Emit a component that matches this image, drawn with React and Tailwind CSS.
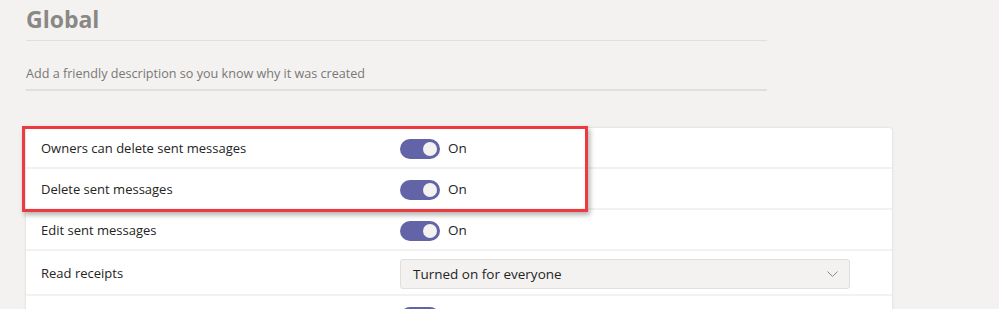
import React from 'react';

function Toggle({ label = 'On' }) {
    return (
        <div className="flex items-center gap-2 pt-[2px]">
            <div className="w-[40px] h-[20px] rounded-full bg-[#6264a7] flex items-center justify-end px-[3px]">
                <div className="w-[14px] h-[14px] rounded-full bg-[#f3f2f1]" />
            </div>
            {label && <span className="text-[13.5px] text-[#252423]">{label}</span>}
        </div>
    );
}

function Row({ label, children, tall }) {
    return (
        <div className={`flex items-center border-b-2 border-[#f3f2f1] ${tall ? 'h-[45px]' : 'h-[41px]'}`}>
            <div className="w-[374px] pl-[15px] pt-[3px] text-[13px] text-[#252423]">{label}</div>
            {children}
        </div>
    );
}

export default function App() {
    return (
        <div
            className="w-[999px] h-[309px] overflow-hidden bg-[#f3f2f1] pl-[26px]"
            style={{ fontFamily: '"Segoe UI", "Open Sans", "Noto Sans", sans-serif' }}
        >
            <div className="w-[741px]">
                <h1 className="pt-[3px] h-[40px] text-[23px] font-bold text-[#8a8886] leading-[32px]">Global</h1>
                <div className="h-[1px] bg-[#e1dfdd]" />
                <div className="pt-[23px] h-[48px] text-[12.6px] text-[#797775] leading-[20px]">
                    Add a friendly description so you know why it was created
                </div>
                <div className="h-[2px] bg-[#e1dfdd]" />
            </div>

            <div className="relative mt-[37px] w-[866px] bg-white rounded-[3px] shadow-[0_0_3px_rgba(0,0,0,0.12)]">
                {/* annotation box */}
                <div className="absolute left-[-4px] top-[-2px] w-[566px] h-[86px] border-[3px] border-[#ec3a40] shadow-[2px_3px_5px_rgba(0,0,0,0.3)] pointer-events-none" />

                <Row label="Owners can delete sent messages"><Toggle /></Row>
                <Row label="Delete sent messages"><Toggle /></Row>
                <Row label="Edit sent messages"><Toggle /></Row>
                <Row label="Read receipts" tall>
                    <div className="w-[450px] h-[30px] mt-[3px] bg-[#f3f2f1] border border-[#e1dfdd] rounded-[3px] flex items-center justify-between pl-[12px] pr-[11px]">
                        <span className="text-[13.5px] text-[#252423]">Turned on for everyone</span>
                        <svg width="11" height="6" viewBox="0 0 11 6" fill="none">
                            <path d="M0.5 0.5l5 5 5-5" stroke="#8a8886" strokeWidth="1" />
                        </svg>
                    </div>
                </Row>
                {/* next row, only its toggle top is in view */}
                <Row label=""><Toggle label="" /></Row>
            </div>
        </div>
    );
}
